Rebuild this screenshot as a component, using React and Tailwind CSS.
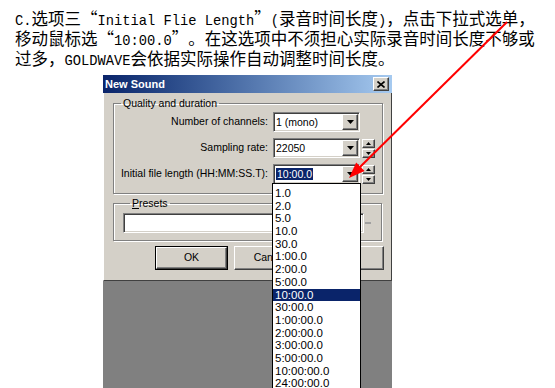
import React from "react";

const raised =
  "bg-[#d4d0c8] border border-t-white border-l-white border-r-[#404040] border-b-[#404040] shadow-[inset_-1px_-1px_0_#808080]";
const sunken =
  "bg-white border border-t-[#808080] border-l-[#808080] border-r-white border-b-white shadow-[inset_1px_1px_0_#404040,inset_-1px_-1px_0_#d4d0c8]";
const etched = "border border-[#808080] shadow-[1px_1px_0_#fff,inset_1px_1px_0_#fff]";

const M = ({ children }) => (
  <span className="font-['Liberation_Mono',monospace] text-[13.75px]">{children}</span>
);

const QL = () => <span className="inline-block w-[16.5px] text-right">“</span>;
const QR = () => <span className="inline-block w-[16.5px] text-left">”</span>;

const Down = () => (
  <svg width="7" height="4" viewBox="0 0 7 4">
    <path d="M0 0h7L3.5 4z" fill="#000" />
  </svg>
);

const SmallTri = ({ up }) => (
  <svg width="5" height="3" viewBox="0 0 5 3">
    <path d={up ? "M2.5 0L5 3H0z" : "M0 0h5L2.5 3z"} fill="#000" />
  </svg>
);

function Combo({ value, selected }) {
  return (
    <div className={`${sunken} w-[87px] h-[20px] flex items-center`}>
      <div className="flex-1 pl-[2px] leading-[14px]">
        {selected ? <span className="bg-[#0a246a] text-white px-[1px]">{value}</span> : value}
      </div>
      <div className={`${raised} w-[16px] h-[16px] mr-[1px] flex items-center justify-center`}>
        <Down />
      </div>
    </div>
  );
}

function Spin() {
  return (
    <div className="ml-[2px] flex flex-col gap-[1px]">
      <div className={`${raised} w-[13px] h-[9px] flex items-center justify-center`}>
        <SmallTri up />
      </div>
      <div className={`${raised} w-[13px] h-[9px] flex items-center justify-center`}>
        <SmallTri />
      </div>
    </div>
  );
}

function Row({ label, value, selected, spin }) {
  return (
    <div className="flex items-center h-[20px]">
      <span className="w-[154px] text-right whitespace-nowrap">{label}</span>
      <div className="ml-[5px]">
        <Combo value={value} selected={selected} />
      </div>
      {spin && <Spin />}
    </div>
  );
}

const lengths = [
  "1.0", "2.0", "5.0", "10.0", "30.0", "1:00.0", "2:00.0", "5:00.0",
  "10:00.0", "30:00.0", "1:00:00.0", "2:00:00.0", "3:00:00.0", "5:00:00.0",
  "10:00:00.0", "24:00:00.0",
];

export default function App() {
  return (
    <div className="relative w-[555px] h-[388px] bg-white overflow-hidden text-black">
      {/* instructions */}
      <div className="pl-[15px] pt-[8px] font-['Noto_Sans_CJK_SC',sans-serif] text-[16.5px]">
        <div className="h-[20px] leading-[20px] whitespace-nowrap">
          <M>C.</M>选项三<QL /><M>Initial Flie Length</M><QR /><M>(</M>录音时间长度<M>)</M>，点击下拉式选单，
        </div>
        <div className="h-[20px] leading-[20px] whitespace-nowrap">
          移动鼠标选<QL /><M>10:00.0</M><QR />。在这选项中不须担心实际录音时间长度不够或
        </div>
        <div className="h-[20px] leading-[20px] whitespace-nowrap">
          过多，<M>GOLDWAVE</M>会依据实际操作自动调整时间长度。
        </div>
      </div>

      {/* dialog */}
      <div className="ml-[103px] mt-[7px] w-[289px] font-['Liberation_Sans',Arial,sans-serif] text-[10.5px]">
        <div className="h-[18px] bg-linear-to-r from-[#0a246a] to-[#a6caf0] flex items-center justify-between pl-[2px] pr-[3px]">
          <span className="text-white font-bold text-[11px]">New Sound</span>
          <div className={`${raised} w-[16px] h-[14px] flex items-center justify-center`}>
            <svg width="8" height="7" viewBox="0 0 8 7">
              <path d="M0.5 0.5L7.5 6.5M7.5 0.5L0.5 6.5" stroke="#000" strokeWidth="1.6" />
            </svg>
          </div>
        </div>

        <div className="h-[188px] bg-[#d4d0c8] border-l border-l-white border-r border-r-[#404040] border-b border-b-[#404040] pl-[9px] flex flex-col">
          <fieldset className={`${etched} w-[270px] mt-[4px] pt-[2px] pb-[9px]`}>
            <legend className="ml-[7px] px-[2px] leading-[13px]">Quality and duration</legend>
            <div className="flex flex-col gap-[6px]">
              <Row label="Number of channels:" value="1 (mono)" />
              <Row label="Sampling rate:" value="22050" spin />
              <Row label="Initial file length (HH:MM:SS.T):" value="10:00.0" selected spin />
            </div>
          </fieldset>

          <fieldset className={`${etched} w-[269px] mt-[3px] pt-[3px] pb-[7px] pl-[9px] pr-[3px]`}>
            <legend className="ml-[7px] px-[2px] leading-[13px]">
              <span className="underline">P</span>resets
            </legend>
            <div className="flex items-center">
              <div className={`${sunken} w-[241px] h-[20px]`} />
              <div className="ml-[1px] w-[6px] h-[2px] bg-[#a0a0a0]" />
            </div>
          </fieldset>

          <div className="flex gap-[6px] mt-[5px] ml-[42px]">
            <div className="border border-black">
              <div className={`${raised} w-[71px] h-[22px] flex items-center justify-center`}>OK</div>
            </div>
            <div className={`${raised} w-[72px] h-[24px] flex items-center justify-center`}>Cancel</div>
            <div className={`${raised} w-[72px] h-[24px] flex items-center justify-center`}>Help</div>
          </div>
        </div>

        <div className="h-[107px] bg-[#808080]" />
      </div>

      {/* dropdown list */}
      <div className="absolute left-[272px] top-[183px] w-[89px] h-[215px] border border-black bg-white pt-[3px] font-['Liberation_Sans',Arial,sans-serif] text-[11.5px]">
        {lengths.map((l) => (
          <div
            key={l}
            className={`h-[12.7px] leading-[12.7px] pl-[2px] ${l === "10:00.0" ? "bg-[#0a246a] text-white" : ""}`}
          >
            {l}
          </div>
        ))}
      </div>

      {/* red arrow */}
      <svg className="absolute left-0 top-0 pointer-events-none" width="555" height="388">
        <line x1="507" y1="22" x2="360" y2="167" stroke="#ff0000" strokeWidth="2" />
        <polygon points="349,178 364.6,171.1 356.2,162.5" fill="#ff0000" />
      </svg>
    </div>
  );
}
